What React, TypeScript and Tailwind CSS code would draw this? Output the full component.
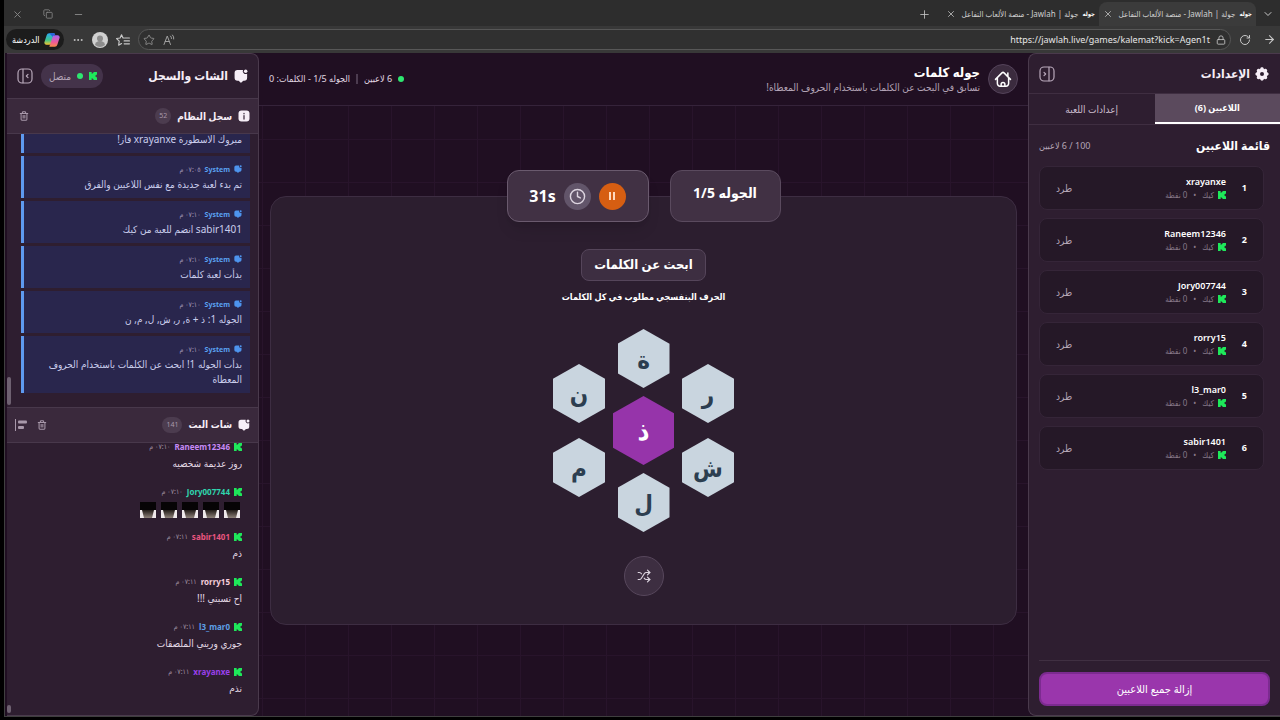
import type { ReactNode } from 'react'
import {
  ArrowRight,
  ChevronDown,
  Clock,
  Copy,
  Ellipsis,
  Lock,
  Minus,
  Plus,
  RotateCw,
  Shuffle,
  Star,
  Trash2,
  X,
} from 'lucide-react'
import { TbSettingsFilled } from 'react-icons/tb'

const players = [
  { name: 'xrayanxe', points: 0 },
  { name: 'Raneem12346', points: 0 },
  { name: 'Jory007744', points: 0 },
  { name: 'rorry15', points: 0 },
  { name: 'l3_mar0', points: 0 },
  { name: 'sabir1401', points: 0 },
]

const logs = [
  { text: 'مبروك الاسطورة xrayanxe فاز!' },
  { time: '٠٧:٠٥ م', text: 'تم بدء لعبة جديدة مع نفس اللاعبين والفرق' },
  { time: '٠٧:١٠ م', text: 'sabir1401 انضم للعبة من كيك' },
  { time: '٠٧:١٠ م', text: 'بدأت لعبة كلمات' },
  { time: '٠٧:١٠ م', text: 'الجوله 1: ذ + ة, ر, ش, ل, م, ن' },
  { time: '٠٧:١٠ م', text: 'بدأت الجوله 1! ابحث عن الكلمات باستخدام الحروف المعطاة' },
]

const chats = [
  { name: 'Raneem12346', color: 'text-[#c58af5]', time: '٠٧:١٠ م', text: 'روز عديمة شخصيه' },
  { name: 'Jory007744', color: 'text-[#2fd6ae]', time: '٠٧:١٠ م', emotes: 5 },
  { name: 'sabir1401', color: 'text-[#e8557f]', time: '٠٧:١١ م', text: 'ذم' },
  { name: 'rorry15', color: 'text-[#f6cfdc]', time: '٠٧:١١ م', text: 'اح تسبني !!!' },
  { name: 'l3_mar0', color: 'text-[#5c9fe6]', time: '٠٧:١١ م', text: 'جوري وريني الملصقات' },
  { name: 'xrayanxe', color: 'text-[#9a40ea]', time: '٠٧:١١ م', text: 'نذم' },
]

function KickIcon({ className }: { className: string }) {
  return (
    <svg viewBox="0 0 9 9" className={className} fill="#1ee85a" aria-hidden="true">
      <path d="M0 0h3v2h1V1h1V0h4v3H8v1H7v1h1v1h1v3H5V8H4V7H3v2H0z" />
    </svg>
  )
}

function ChatIcon({ className }: { className: string }) {
  return (
    <svg viewBox="0 0 24 24" className={className} fill="currentColor" aria-hidden="true">
      <path d="M6 1.5h9.5a5 5 0 0 0 7 6.5V15a5 5 0 0 1-5 5h-1.5l-3.4 3.2a1 1 0 0 1-1.4 0L8 20H6a5 5 0 0 1-5-5V6.5a5 5 0 0 1 5-5z" />
      <circle cx="20" cy="4" r="3" />
    </svg>
  )
}

function InfoIcon() {
  return (
    <svg viewBox="0 0 24 24" className="size-3" aria-hidden="true">
      <rect x="1" y="1" width="22" height="22" rx="6" fill="#f6eef7" />
      <path d="M12 11v7M12 6.5v1" stroke="#3a293c" strokeWidth="2.5" strokeLinecap="round" />
    </svg>
  )
}

function PanelIcon({ side }: { side: 'left' | 'right' }) {
  return (
    <svg viewBox="0 0 24 24" className="size-4" fill="none" stroke="currentColor" strokeWidth="1.8" strokeLinecap="round" strokeLinejoin="round" aria-hidden="true">
      <rect x="1.5" y="1.5" width="21" height="21" rx="6" />
      {side === 'left' ? <path d="M9 2v20M16.5 9.5 14 12l2.5 2.5" /> : <path d="M15 2v20M7.5 9.5 10 12l-2.5 2.5" />}
    </svg>
  )
}

function HomeIcon() {
  return (
    <svg viewBox="0 0 24 24" className="size-[18px]" fill="none" stroke="currentColor" strokeWidth="2" strokeLinecap="round" strokeLinejoin="round" aria-hidden="true">
      <path d="M2 12.5 10.6 3.8a2 2 0 0 1 2.8 0L22 12.5M4.500 10.500v7.500A3.500 3.500 0 0 0 8 21.500h8a3.500 3.500 0 0 0 3.500-3.500v-7.500M18.500 4v4" />
      <path d="M9.500 21.500V19a2.500 2.500 0 0 1 5 0v2.500" />
    </svg>
  )
}

function CopilotIcon() {
  return (
    <svg viewBox="0 0 24 24" className="size-4" aria-hidden="true">
      <defs>
        <linearGradient id="copilot-a" x1="0" y1="0" x2="0" y2="1">
          <stop offset="0" stopColor="#2aa9f2" />
          <stop offset=".6" stopColor="#3fc58a" />
          <stop offset="1" stopColor="#f4c430" />
        </linearGradient>
        <linearGradient id="copilot-b" x1="0" y1="0" x2="0" y2="1">
          <stop offset="0" stopColor="#a864f0" />
          <stop offset=".6" stopColor="#ee5a9b" />
          <stop offset="1" stopColor="#fb8a4a" />
        </linearGradient>
      </defs>
      <path d="M8 2h8l-5 15a3 3 0 0 1-3 2H3.5a3 3 0 0 1-2.8-4L4 5a4 4 0 0 1 4-3z" fill="url(#copilot-a)" />
      <path d="M16 22H8l5-15a3 3 0 0 1 3-2h4.5a3 3 0 0 1 2.8 4L20 19a4 4 0 0 1-4 3z" fill="url(#copilot-b)" />
      <path d="M8 2h6a3 3 0 0 1 3 3h-1a3 3 0 0 0-3 2z" fill="#2b5fd9" />
    </svg>
  )
}

function ReadAloudIcon() {
  return (
    <svg viewBox="0 0 24 24" className="size-3" fill="none" stroke="currentColor" strokeWidth="2" strokeLinecap="round" strokeLinejoin="round" aria-hidden="true">
      <path d="M2 21 8.5 4 15 21M4.5 15h8M15 4a6 6 0 0 1 2 5M19 2a9 9 0 0 1 2.5 8" />
    </svg>
  )
}

function FavoritesIcon() {
  return (
    <svg viewBox="0 0 24 24" className="size-3.5" fill="none" stroke="currentColor" strokeWidth="2" strokeLinecap="round" strokeLinejoin="round" aria-hidden="true">
      <path d="M14 8.5h-2L9.5 3 7 8.5l-6 1L5.5 14l-1 7 5-3M15.5 8.5H23M14 13.5h9M14 18.5h9" />
    </svg>
  )
}

function AlignIcon() {
  return (
    <svg viewBox="0 0 12 12" className="size-3" fill="currentColor" aria-hidden="true">
      <rect x="0" y="0" width="1" height="12" />
      <rect x="3" y="1.500" width="9" height="3" rx="1" />
      <rect x="3" y="7" width="6" height="3" rx="1" />
    </svg>
  )
}

function Emote() {
  return (
    <svg viewBox="0 0 16 16" className="size-4" role="img" aria-label="ملصق">
      <defs>
        <linearGradient id="emote-floor" x1="0" y1="0" x2="0" y2="1">
          <stop offset="0" stopColor="#221b18" />
          <stop offset="1" stopColor="#8d8078" />
        </linearGradient>
      </defs>
      <rect width="16" height="16" fill="#060405" />
      <path d="M2 8h12v8H2z" fill="url(#emote-floor)" />
      <path d="M0 8h2l2 8H0zM16 8h-2l-2 8h4z" fill="#eee8ea" />
    </svg>
  )
}

function BrowserTab({ active }: { active?: boolean }) {
  return (
    <div className={`flex h-6 w-[157px] items-center gap-1 rounded-t-lg px-1 ${active ? 'bg-[#3b3b3b]' : ''}`}>
      <span className="shrink-0 text-[6px] font-bold text-white">جوله</span>
      <span className="flex-1 text-[8px] whitespace-nowrap text-[#d0d0d0]">جولة | Jawlah - منصة الألعاب التفاعل</span>
      <button aria-label="إغلاق علامة التبويب" className="shrink-0 text-[#bdbdbd]"><X size={10} /></button>
    </div>
  )
}

function BrowserBar() {
  return (
    <header className="shrink-0 bg-[#2d2d2d] text-[#c8c8c8]">
      <div className="flex h-[26px] items-end">
        <div className="flex h-6 w-6 items-center justify-center"><ChevronDown size={12} /></div>
        <BrowserTab active />
        <BrowserTab />
        <button aria-label="علامة تبويب جديدة" className="flex h-6 w-9 items-center justify-center"><Plus size={13} strokeWidth={1.5} /></button>
        <div className="mr-auto flex h-6 items-center gap-5 pl-2 text-[#888]">
          <Minus size={11} />
          <Copy size={10} />
          <X size={11} />
        </div>
      </div>
      <div className="flex h-[27px] items-center gap-2 bg-[#383838] pr-1 pl-0.5">
        <ArrowRight size={13} />
        <RotateCw size={12} className="mr-1" />
        <div className="flex h-[21px] flex-1 items-center gap-1.5 rounded-full border border-[#575757] bg-[#303030] px-1">
          <Lock size={10} />
          <span dir="ltr" className="text-[9px] text-[#e6e6e6]">https://jawlah.live/games/kalemat?kick=Agen1t</span>
          <span className="mr-auto flex items-center gap-2 text-[#a0a0a0]">
            <ReadAloudIcon />
            <Star size={12} strokeWidth={1.5} />
          </span>
        </div>
        <FavoritesIcon />
        <svg viewBox="0 0 16 16" className="size-4" aria-hidden="true">
          <circle cx="8" cy="8" r="8" fill="#d0d0d0" />
          <circle cx="8" cy="6.5" r="3" fill="#8c8c8c" />
          <path d="M3 13a5 4 0 0 1 10 0 8 8 0 0 1-10 0z" fill="#8c8c8c" />
        </svg>
        <Ellipsis size={12} />
        <button className="flex h-[21px] items-center gap-1 rounded-full bg-[#1c1c1c] pr-1 pl-1.5 text-[9px] font-medium text-white">
          <CopilotIcon />
          الدردشة
        </button>
      </div>
    </header>
  )
}

function SettingsPanel() {
  return (
    <aside className="flex w-[252px] shrink-0 flex-col rounded-tl-lg rounded-bl-lg border border-r-0 border-[#4a3a4c] bg-[#2e1e30]">
      <div className="flex h-[39px] items-center gap-1 px-2.5 text-[#f6eef7]">
        <TbSettingsFilled size={16} />
        <h2 className="text-xs font-bold">الإعدادات</h2>
        <button aria-label="طي الإعدادات" className="mr-auto text-[#b9a9bb]"><PanelIcon side="right" /></button>
      </div>
      <div className="flex h-8 border-y border-[#3f2e41]">
        <button className="flex-1 border-b-2 border-white bg-[#5b4a5d] text-[9px] font-bold text-white">اللاعبين (6)</button>
        <button className="flex-1 text-[10px] text-[#cbbccd]">إعدادات اللعبة</button>
      </div>
      <div className="flex h-[41px] items-center justify-between px-2.5">
        <h3 className="text-xs font-bold text-white">قائمة اللاعبين</h3>
        <span className="text-[9px] text-[#b5a6b7]">100 / 6 لاعبين</span>
      </div>
      <ol className="flex flex-1 flex-col gap-2 pr-4 pl-2.5">
        {players.map((player, i) => (
          <li key={player.name} className="flex h-11 items-center rounded-lg border border-[#352538] bg-[#251827] px-4">
            <span className="w-[21px] text-[9px] font-bold text-white">{i + 1}</span>
            <div>
              <p className="text-[9px] leading-[14px] font-semibold text-white">{player.name}</p>
              <p className="flex items-center gap-1 text-[8px] leading-3 text-[#88798a]">
                <KickIcon className="size-2" />
                <span>كيك</span>
                <span className="px-0.5">•</span>
                <span>{player.points} نقطة</span>
              </p>
            </div>
            <button className="mr-auto text-[10px] text-[#b5a6b7]">طرد</button>
          </li>
        ))}
      </ol>
      <div className="mx-2.5 border-t border-[#403042] pt-[11px] pb-[9px]">
        <button className="h-[34px] w-full rounded-lg border-2 border-[#7c2b90] bg-[#9a36ac] text-[11px] font-medium text-white">إزالة جميع اللاعبين</button>
      </div>
    </aside>
  )
}

function Hex({ children, center }: { children: ReactNode; center?: boolean }) {
  return (
    <button
      className={`flex items-center justify-center font-bold [clip-path:polygon(50%_0,100%_25%,100%_75%,50%_100%,0_75%,0_25%)] ${
        center ? 'h-[69px] w-[61px] bg-[#9634aa] text-[26px] text-white' : 'h-[59px] w-[52px] bg-[#c9d5df] text-2xl text-[#2c3e50]'
      }`}
    >
      {children}
    </button>
  )
}

function Game() {
  return (
    <main className="flex min-w-0 flex-1 flex-col bg-[#200f22]">
      <div className="flex h-[53px] shrink-0 items-center gap-2 border-b border-[#35233a] px-2.5">
        <a href="#home" aria-label="الرئيسية" className="flex size-[30px] items-center justify-center rounded-full border border-[#54435a] bg-[#3b2b3e] text-white"><HomeIcon /></a>
        <div>
          <h1 className="text-[13px] leading-4 font-bold text-white">جوله كلمات</h1>
          <p className="text-[10px] leading-[15px] text-[#b3a3b5]">تسابق في البحث عن الكلمات باستخدام الحروف المعطاة!</p>
        </div>
        <div className="mr-auto flex items-center text-[9px] text-[#e2d9e4]">
          <span className="ml-1.5 size-1.5 rounded-full bg-[#2ee670]" />
          <span>6 لاعبين</span>
          <span className="mx-1.5 h-2.5 w-0.5 bg-[#4c3c50]" />
          <span>الجوله 1/5 - الكلمات: 0</span>
        </div>
      </div>
      <div className="flex flex-1 flex-col bg-[linear-gradient(to_right,#28142b_1px,transparent_1px),linear-gradient(to_bottom,#28142b_1px,transparent_1px)] bg-[size:43px_43px] bg-[position:3px_33px] px-[11px] pt-[90px]">
        <section className="flex h-[429px] flex-col items-center rounded-2xl border border-[#3d2d42] bg-[#2c1e2f]">
          <div className="-mt-[27px] flex gap-[21px]">
            <div className="flex h-[52px] w-[111px] justify-center rounded-xl border border-[#5a4a5e] bg-[#413144] pt-3 text-sm font-bold text-white">الجوله 1/5</div>
            <div className="flex h-[52px] w-[142px] items-center justify-center gap-2 rounded-xl border border-[#6a5a6e] bg-[#413144] shadow-lg">
              <button aria-label="إيقاف مؤقت" className="flex size-[27px] items-center justify-center rounded-full bg-[#d65e12]">
                <svg viewBox="0 0 8 8" className="size-2" fill="#ffd9bd" aria-hidden="true"><path d="M1 0h2v8H1zM5 0h2v8H5z" /></svg>
              </button>
              <span className="flex size-[27px] items-center justify-center rounded-full bg-[#62556a] text-[#ddd5e0]"><Clock size={17} /></span>
              <span dir="ltr" className="text-base font-bold text-white">31s</span>
            </div>
          </div>
          <h2 className="mt-[27px] flex h-8 items-center rounded-lg border border-[#55455a] bg-[#3d2e41] px-3 text-[13px] font-bold text-white">ابحث عن الكلمات</h2>
          <p className="mt-2 text-[9px] leading-4 font-bold text-white">الحرف البنفسجي مطلوب في كل الكلمات</p>
          <div className="mt-6 flex items-center gap-2">
            <div className="flex flex-col gap-[15px]">
              <Hex>ر</Hex>
              <Hex>ش</Hex>
            </div>
            <div className="flex flex-col items-center gap-2">
              <Hex>ة</Hex>
              <Hex center>ذ</Hex>
              <Hex>ل</Hex>
            </div>
            <div className="flex flex-col gap-[15px]">
              <Hex>ن</Hex>
              <Hex>م</Hex>
            </div>
          </div>
          <button aria-label="خلط الحروف" className="mt-6 flex size-10 items-center justify-center rounded-full border border-[#57475c] bg-[#3d2e41] text-[#ddd5e0]"><Shuffle size={14} /></button>
        </section>
      </div>
    </main>
  )
}

function SectionHeader({ icon, title, count, children }: { icon: ReactNode; title: string; count: number; children: ReactNode }) {
  return (
    <div className="flex h-9 shrink-0 items-center gap-1.5 border-y border-[#48384b] bg-[#3a293c] px-2 text-[#f6eef7]">
      {icon}
      <h3 className="text-[10px] font-bold">{title}</h3>
      <span className="rounded-full bg-[#4c3c4f] px-1 text-[7px] leading-4 text-[#a898aa]">{count}</span>
      <div className="mr-auto flex items-center gap-2.5 text-[#a898aa]">{children}</div>
    </div>
  )
}

function ChatPanel() {
  return (
    <aside className="ml-0.5 flex w-[252px] shrink-0 flex-col overflow-hidden rounded-tr-lg rounded-br-lg border border-l-0 border-[#4a3a4c] bg-[#2e1e30]">
      <div className="flex h-11 shrink-0 items-center gap-1.5 px-2.5 text-[#f6eef7]">
        <ChatIcon className="size-3.5" />
        <h2 className="text-xs font-bold">الشات والسجل</h2>
        <div className="mr-auto flex items-center gap-2">
          <span className="flex h-6 items-center gap-1.5 rounded-full bg-[#44334a] pr-1.5 pl-2 text-[10px] text-[#b5a6b7]">
            <KickIcon className="size-2" />
            <span className="size-1.5 rounded-full bg-[#2ee670]" />
            متصل
          </span>
          <button aria-label="طي الشات" className="text-[#b9a9bb]"><PanelIcon side="left" /></button>
        </div>
      </div>
      <SectionHeader icon={<InfoIcon />} title="سجل النظام" count={52}>
        <button aria-label="مسح السجل" className="ml-1"><Trash2 size={10} strokeWidth={2.5} /></button>
      </SectionHeader>
      <div className="flex min-h-0 flex-1 flex-row-reverse overflow-hidden">
        <span className="mb-0.5 h-7 w-1 shrink-0 self-end rounded-full bg-[#6e6171]" />
        <div className="mr-2 ml-2.5 flex flex-1 flex-col justify-end gap-[3px] pb-3.5">
          {logs.map((log, i) => (
            <div key={i} className="border-l-[3px] border-[#5e9af0] bg-[#29264d] py-1.5 pr-2 pl-1 leading-[15px]">
              {log.time && (
                <p className="flex items-center gap-1">
                  <ChatIcon className="size-2 text-[#4d94ee]" />
                  <b className="text-[7px] text-[#5aa2f2]">System</b>
                  <time className="text-[7px] text-[#a196b8]">{log.time}</time>
                </p>
              )}
              <p className="text-[10px] text-[#c9cdec]">{log.text}</p>
            </div>
          ))}
        </div>
      </div>
      <SectionHeader icon={<ChatIcon className="size-3" />} title="شات البث" count={141}>
        <button aria-label="مسح الشات"><Trash2 size={10} strokeWidth={2.5} /></button>
        <button aria-label="محاذاة"><AlignIcon /></button>
      </SectionHeader>
      <div className="flex min-h-0 flex-1 flex-row-reverse overflow-hidden">
        <span className="mb-0.5 h-2 w-1 shrink-0 self-end rounded-full bg-[#6e6171]" />
        <div className="mr-4 flex flex-1 flex-col justify-end gap-3 pb-[18px]">
          {chats.map((chat) => (
            <div key={chat.name}>
              <p className="flex items-center gap-1 leading-4">
                <KickIcon className="size-2" />
                <b className={`text-[8px] ${chat.color}`}>{chat.name}</b>
                <time className="text-[7px] text-[#a091a2]">{chat.time}</time>
              </p>
              {chat.text && <p className="text-[10px] leading-[17px] text-[#e3d9e5]">{chat.text}</p>}
              {chat.emotes && (
                <p className="flex h-[17px] gap-[5px] pt-0.5 pr-0.5">
                  {Array.from({ length: chat.emotes }, (_, i) => <Emote key={i} />)}
                </p>
              )}
            </div>
          ))}
        </div>
      </div>
    </aside>
  )
}

export default function App() {
  return (
    <div dir="rtl" className="flex h-screen min-w-0 flex-col overflow-hidden bg-black pb-[3px] pl-1 font-['Noto_Sans','DejaVu_Sans_Condensed','DejaVu_Sans',sans-serif]">
      <BrowserBar />
      <div className="flex min-h-0 flex-1 border-b border-l border-[#3f3f3f] bg-[#200f22]">
        <SettingsPanel />
        <Game />
        <ChatPanel />
      </div>
    </div>
  )
}
